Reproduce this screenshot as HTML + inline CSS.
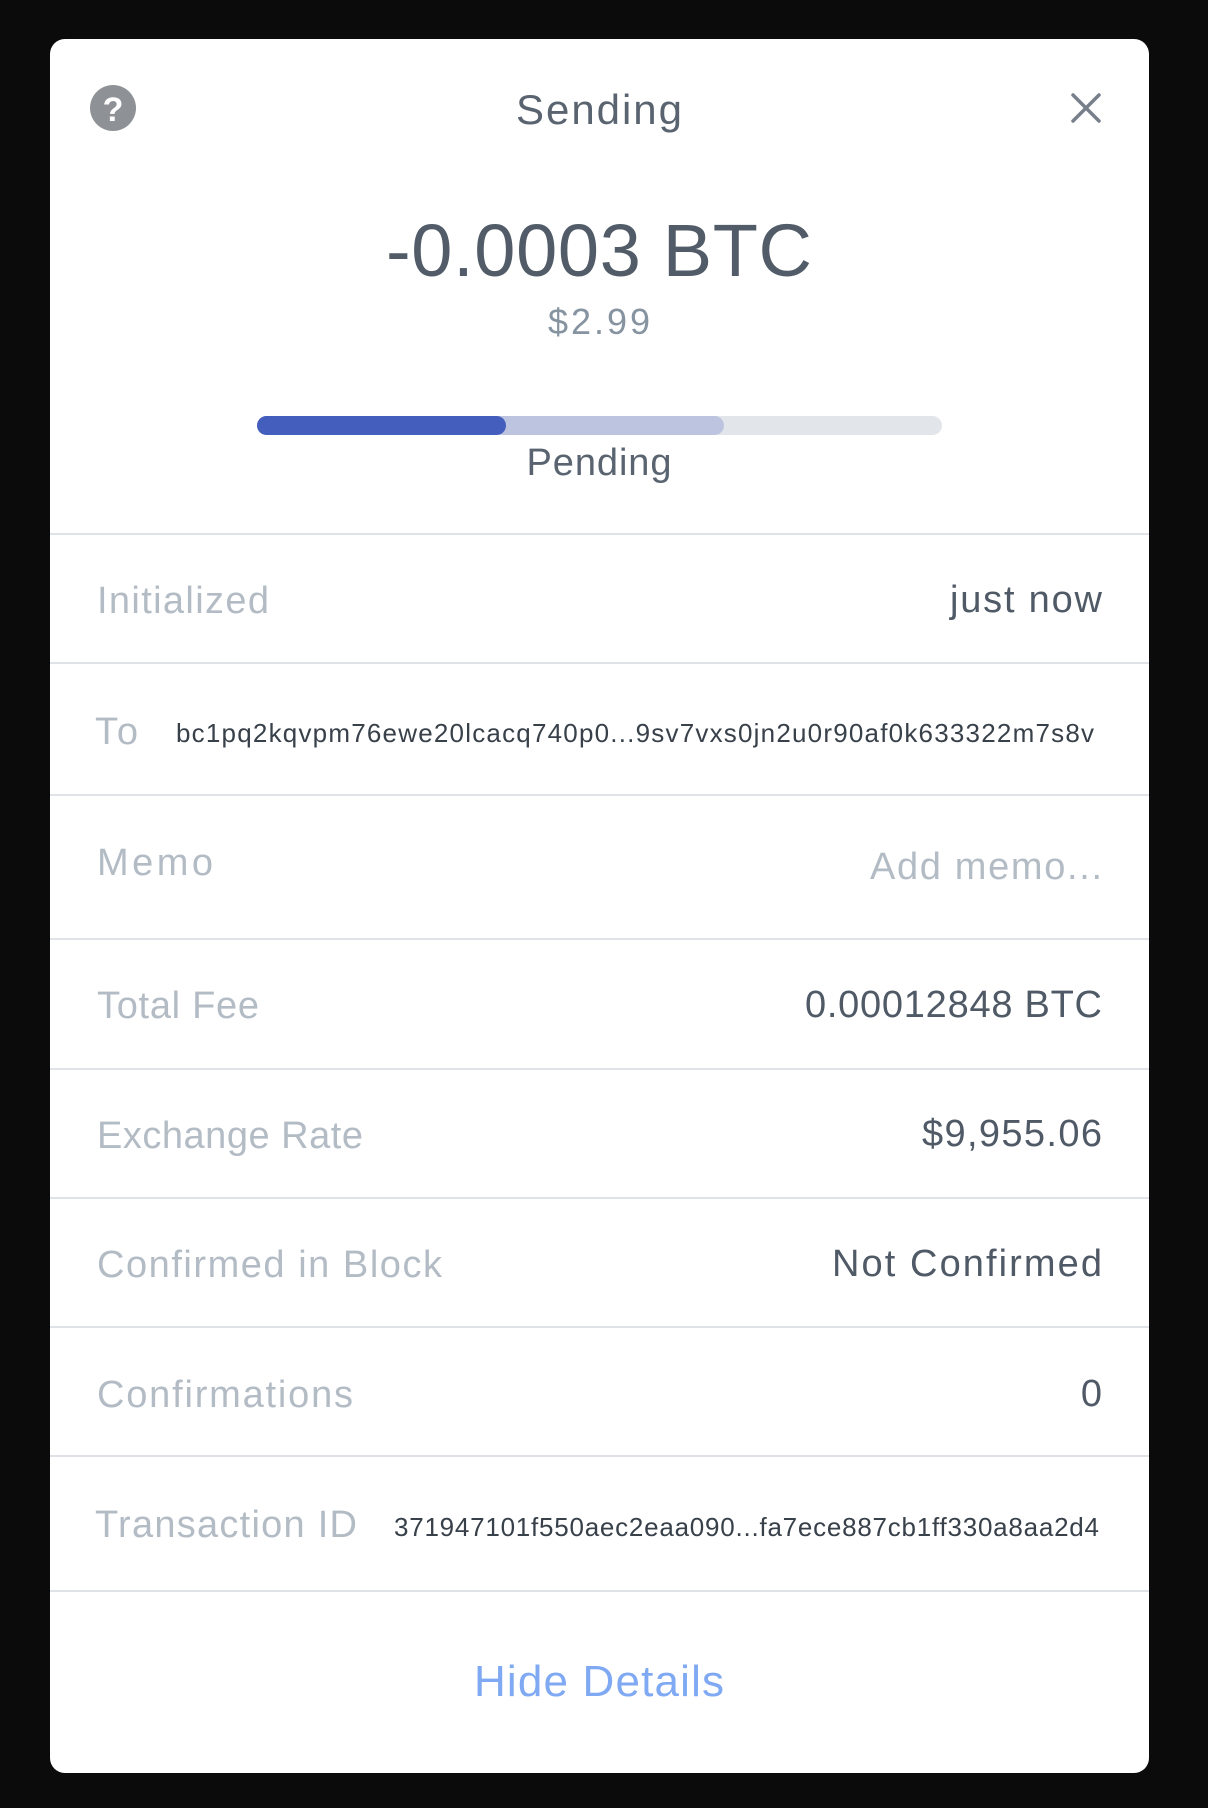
<!DOCTYPE html>
<html><head><meta charset="utf-8"><style>
html,body{margin:0;padding:0;background:#0b0b0b;width:1208px;height:1808px;overflow:hidden}
svg{display:block}
text{font-family:"Liberation Sans",sans-serif}
</style></head><body>
<svg width="1208" height="1808" viewBox="0 0 1208 1808">
<rect x="0" y="0" width="1208" height="1808" fill="#0b0b0b"/>
<rect x="50" y="39" width="1099" height="1734" rx="15" fill="#fff"/>
<!-- help icon -->
<circle cx="113" cy="108" r="23" fill="#8e9296"/>
<text x="113" y="121" text-anchor="middle" font-size="34" font-weight="bold" fill="#fff">?</text>
<!-- close -->
<path d="M1073 95 L1099 121 M1099 95 L1073 121" stroke="#77808a" stroke-width="3.5" stroke-linecap="round"/>
<text x="599" y="124" text-anchor="middle" font-size="42" fill="#5a6470" textLength="166">Sending</text>
<text x="599" y="276" text-anchor="middle" font-size="74" fill="#515c68" textLength="426">-0.0003 BTC</text>
<text x="599" y="334" text-anchor="middle" font-size="36" fill="#8693a0" textLength="102">$2.99</text>
<!-- progress -->
<rect x="257" y="416" width="685" height="19" rx="9.5" fill="#e2e5e9"/>
<rect x="257" y="416" width="467" height="19" rx="9.5" fill="#bcc4df"/>
<rect x="257" y="416" width="249" height="19" rx="9.5" fill="#445ebd"/>
<text x="599" y="475" text-anchor="middle" font-size="38" fill="#5a6470" textLength="145">Pending</text>
<g fill="#dfe2e6">
<rect x="50" y="533" width="1099" height="2"/>
<rect x="50" y="662" width="1099" height="2"/>
<rect x="50" y="794" width="1099" height="2"/>
<rect x="50" y="938" width="1099" height="2"/>
<rect x="50" y="1068" width="1099" height="2"/>
<rect x="50" y="1197" width="1099" height="2"/>
<rect x="50" y="1326" width="1099" height="2"/>
<rect x="50" y="1455" width="1099" height="2"/>
<rect x="50" y="1590" width="1099" height="2"/>
</g>
<g font-size="38" fill="#b3bcc5">
<text x="97" y="613" textLength="172">Initialized</text>
<text x="95" y="744" textLength="43">To</text>
<text x="97" y="875" textLength="116">Memo</text>
<text x="97" y="1018" textLength="162">Total Fee</text>
<text x="97" y="1148" textLength="266">Exchange Rate</text>
<text x="97" y="1277" textLength="345">Confirmed in Block</text>
<text x="97" y="1407" textLength="256">Confirmations</text>
<text x="95" y="1537" textLength="262">Transaction ID</text>
</g>
<g font-size="38" fill="#4f5a66" text-anchor="end">
<text x="1102" y="612" textLength="152">just now</text>
<text x="1102" y="879" fill="#b3bcc5" textLength="232">Add memo...</text>
<text x="1102" y="1017" textLength="297">0.00012848 BTC</text>
<text x="1102" y="1146" textLength="180">$9,955.06</text>
<text x="1102" y="1276" textLength="270">Not Confirmed</text>
<text x="1102" y="1406" textLength="22">0</text>
</g>
<g font-size="26" fill="#38404a">
<text x="176" y="742" textLength="918">bc1pq2kqvpm76ewe20lcacq740p0...9sv7vxs0jn2u0r90af0k633322m7s8v</text>
<text x="394" y="1536" textLength="705">371947101f550aec2eaa090...fa7ece887cb1ff330a8aa2d4</text>
</g>
<text x="599" y="1696" text-anchor="middle" font-size="44" fill="#7fa9f2" textLength="250">Hide Details</text>
</svg>
</body></html>
